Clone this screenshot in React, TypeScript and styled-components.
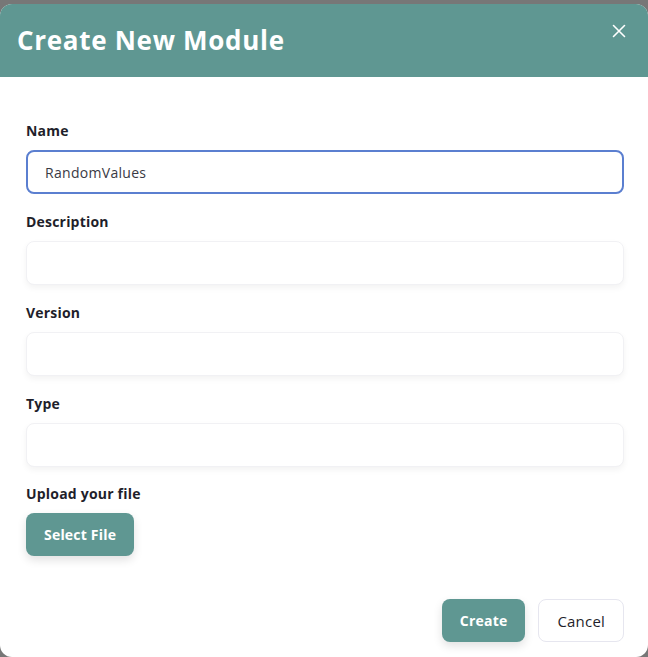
import React, { useState } from 'react'
import styled, { createGlobalStyle } from 'styled-components'

const GlobalStyle = createGlobalStyle`
	html, body {
		margin: 0;
		padding: 0;
		background: #777777;
		font-family: 'Open Sans', 'Liberation Sans', sans-serif;
	}
	* {
		box-sizing: border-box;
	}
`

const Backdrop = styled.div`
	width: 648px;
	height: 657px;
	padding-top: 4px;
	background: #777777;
`

const Dialog = styled.div`
	height: 653px;
	background: #ffffff;
	border-radius: 12px;
	overflow: hidden;
	display: flex;
	flex-direction: column;
`

const Header = styled.div`
	height: 73px;
	background: #5f9792;
	display: flex;
	align-items: center;
	justify-content: space-between;
	padding: 0 17px;
`

const Title = styled.h2`
	margin: 0;
	margin-top: -2px;
	color: #ffffff;
	font-size: 26px;
	font-weight: 700;
	letter-spacing: 0.7px;
`

const CloseButton = styled.button`
	border: none;
	background: none;
	padding: 0;
	width: 18px;
	height: 18px;
	margin-top: -20px;
	margin-right: 3px;
	display: flex;
	align-items: center;
	justify-content: center;
	cursor: pointer;
`

const Body = styled.div`
	flex: 1;
	padding: 45px 24px 0 26px;
	display: flex;
	flex-direction: column;
`

const Field = styled.div`
	display: flex;
	flex-direction: column;
	gap: 10px;
	margin-bottom: 19px;
`

const Label = styled.label`
	font-size: 14px;
	font-weight: 700;
	color: #1f1f2b;
	line-height: 18px;
	letter-spacing: 0.2px;
`

const Input = styled.input<{ $active?: boolean }>`
	height: 44px;
	width: 100%;
	border-radius: 8px;
	border: ${p => (p.$active ? '2px solid #5b7fd0' : '1px solid #f1f1f4')};
	padding: 0 ${p => (p.$active ? '17px' : '18px')};
	font-family: inherit;
	font-size: 14px;
	letter-spacing: 0.3px;
	color: #3a3a44;
	background: #ffffff;
	box-shadow: ${p => (p.$active ? 'none' : '0 3px 6px rgba(0, 0, 0, 0.05)')};
	outline: none;
`

const UploadRow = styled.div`
	margin-top: -1px;
	display: flex;
	flex-direction: column;
	align-items: flex-start;
	gap: 10px;
`

const Button = styled.button<{ $variant?: 'primary' | 'ghost' }>`
	height: 43px;
	border-radius: 8px;
	font-family: inherit;
	font-size: ${p => (p.$variant === 'ghost' ? '15px' : '14px')};
	font-weight: ${p => (p.$variant === 'ghost' ? 500 : 700)};
	letter-spacing: 0.2px;
	cursor: pointer;
	padding: 0 18px;
	color: ${p => (p.$variant === 'ghost' ? '#1f1f2b' : '#ffffff')};
	background: ${p => (p.$variant === 'ghost' ? '#ffffff' : '#5f9792')};
	border: ${p => (p.$variant === 'ghost' ? '1px solid #e6e6ef' : 'none')};
	box-shadow: ${p => (p.$variant === 'ghost' ? 'none' : '0 4px 10px rgba(0, 0, 0, 0.12)')};
`

const Footer = styled.div`
	margin-top: auto;
	display: flex;
	justify-content: flex-end;
	gap: 13px;
	padding-bottom: 15px;
`

const CloseIcon = () => (
	<svg width="14" height="14" viewBox="0 0 14 14" fill="none">
		<path d="M1.5 1.5L12.5 12.5M12.5 1.5L1.5 12.5" stroke="#ffffff" strokeWidth="1.6" strokeLinecap="round" />
	</svg>
)

const App = () => {
	const [values, setValues] = useState({
		name: 'RandomValues',
		description: '',
		version: '',
		type: '',
	})

	const handleChange = (prop: keyof typeof values) => (event: React.ChangeEvent<HTMLInputElement>) => {
		setValues({ ...values, [prop]: event.target.value })
	}

	return (
		<>
			<GlobalStyle />
			<Backdrop>
				<Dialog>
					<Header>
						<Title>Create New Module</Title>
						<CloseButton aria-label="Close">
							<CloseIcon />
						</CloseButton>
					</Header>
					<Body>
						<Field>
							<Label>Name</Label>
							<Input $active value={values.name} onChange={handleChange('name')} />
						</Field>
						<Field>
							<Label>Description</Label>
							<Input value={values.description} onChange={handleChange('description')} />
						</Field>
						<Field>
							<Label>Version</Label>
							<Input value={values.version} onChange={handleChange('version')} />
						</Field>
						<Field>
							<Label>Type</Label>
							<Input value={values.type} onChange={handleChange('type')} />
						</Field>
						<UploadRow>
							<Label>Upload your file</Label>
							<Button>Select File</Button>
						</UploadRow>
						<Footer>
							<Button>Create</Button>
							<Button $variant="ghost">Cancel</Button>
						</Footer>
					</Body>
				</Dialog>
			</Backdrop>
		</>
	)
}

export default App
